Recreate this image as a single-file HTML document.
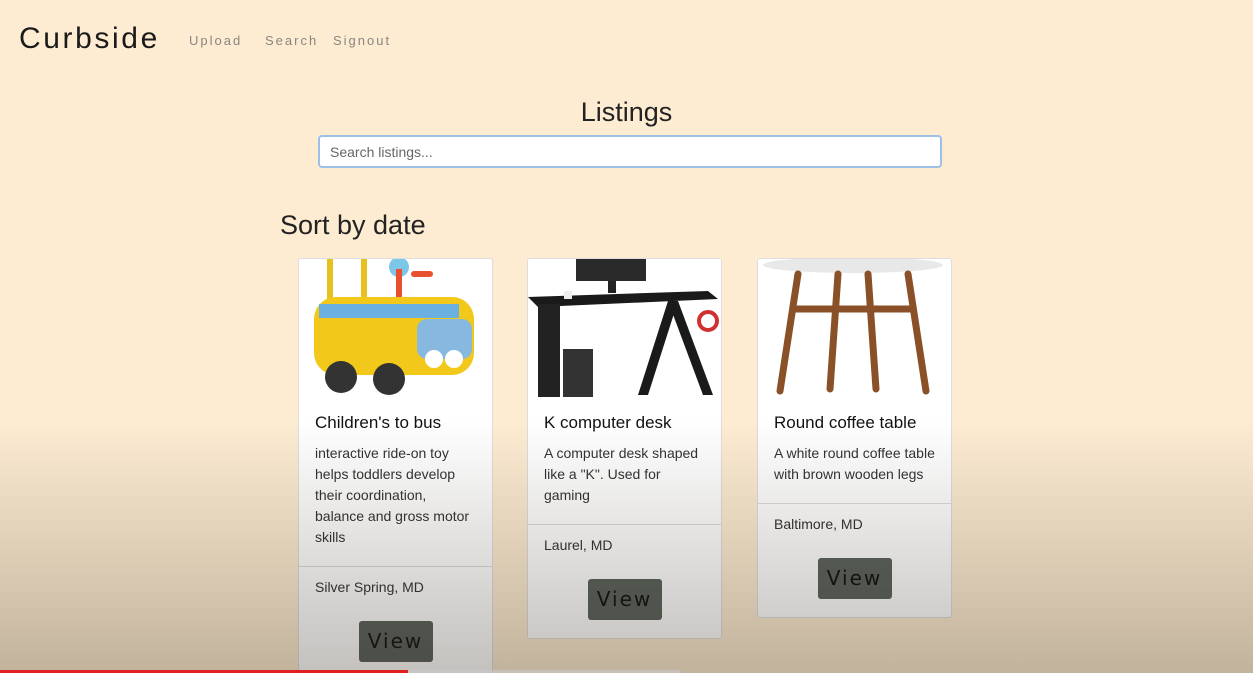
<!DOCTYPE html>
<html style="overflow:hidden"><head><style>
body{margin:0;width:1253px;height:673px;overflow:hidden;background:#fdecd2;font-family:"Liberation Sans",sans-serif;position:relative}
.logo{position:absolute;left:19px;top:22px;font-size:30px;letter-spacing:2.6px;color:#1a1a1a;font-family:"Liberation Sans",sans-serif}
.nav{position:absolute;top:33px;font-size:13px;letter-spacing:2px;color:#8a8580;font-family:"Liberation Sans",sans-serif}
h1{position:absolute;left:0;width:1253px;top:97px;margin:0;text-align:center;font-weight:normal;font-size:27px;color:#222}
.search{position:absolute;left:318px;top:135px;width:624px;height:33px;border:2px solid #9ec0e6;border-radius:4px;background:#fff;box-sizing:border-box;font-size:14px;color:#666;padding:7px 10px}
h2{position:absolute;left:280px;top:210px;margin:0;font-weight:normal;font-size:27px;color:#222}
.card{position:absolute;top:258px;width:193px;background:#fff;border:1px solid #ddd;border-radius:3px}
.img{height:138px;position:relative;overflow:hidden}
.t{font-size:17px;color:#111;margin:16px 16px 0}
.d{font-size:14px;color:#333;line-height:21px;margin:10px 16px 0}
.f{border-top:1px solid #ddd;margin-top:18px;padding:12px 16px 0;font-size:14px;color:#333}
.btn{display:block;margin:26px auto 18px;width:74px;height:41px;background:#5a625c;border-radius:3px;color:#111;font-family:"DejaVu Sans",sans-serif;font-size:20px;letter-spacing:2px;text-align:center;line-height:41px}
.ov{position:absolute;left:0;top:0;width:1253px;height:673px;background:linear-gradient(to bottom,rgba(0,0,0,0) 0,rgba(0,0,0,0) 420px,rgba(40,30,20,.28) 673px);pointer-events:none}
</style></head><body>
<div class="logo">Curbside</div>
<div class="nav" style="left:189px">Upload</div>
<div class="nav" style="left:265px">Search</div>
<div class="nav" style="left:333px">Signout</div>
<h1>Listings</h1>
<div class="search">Search listings...</div>
<h2>Sort by date</h2>

<div class="card" style="left:298px">
<div class="img"><svg width="193" height="138">
<rect x="28" y="0" width="6" height="40" fill="#e8c020"/><rect x="62" y="0" width="6" height="40" fill="#e8c020"/>
<circle cx="100" cy="8" r="10" fill="#7cc7e8"/><rect x="97" y="10" width="6" height="30" fill="#e85030"/><rect x="112" y="12" width="22" height="6" rx="3" fill="#e85030"/>
<rect x="15" y="38" width="160" height="78" rx="22" fill="#f2c81a"/>
<rect x="20" y="45" width="140" height="14" fill="#6ab0e0"/>
<rect x="118" y="60" width="55" height="40" rx="10" fill="#86b8e0"/>
<circle cx="135" cy="100" r="9" fill="#fff"/><circle cx="155" cy="100" r="9" fill="#fff"/>
<circle cx="42" cy="118" r="16" fill="#333"/><circle cx="90" cy="120" r="16" fill="#333"/>
</svg></div>
<div class="t">Children's to bus</div>
<div class="d">interactive ride-on toy helps toddlers develop their coordination, balance and gross motor skills</div>
<div class="f">Silver Spring, MD<span class="btn">View</span></div>
</div>

<div class="card" style="left:527px">
<div class="img"><svg width="193" height="138">
<rect x="48" y="0" width="70" height="22" fill="#2a2a2a"/><rect x="80" y="22" width="8" height="12" fill="#222"/>
<polygon points="0,38 180,32 190,40 10,48" fill="#1a1a1a"/>
<rect x="10" y="45" width="22" height="93" fill="#222"/><rect x="35" y="90" width="30" height="48" fill="#333"/>
<polygon points="140,42 150,42 185,136 175,136" fill="#1a1a1a"/><polygon points="140,42 150,42 120,136 110,136" fill="#1a1a1a"/>
<circle cx="180" cy="62" r="9" fill="none" stroke="#d03030" stroke-width="4"/>
<rect x="36" y="32" width="8" height="8" fill="#eee"/>
</svg></div>
<div class="t">K computer desk</div>
<div class="d">A computer desk shaped like a "K". Used for gaming</div>
<div class="f">Laurel, MD<span class="btn">View</span></div>
</div>

<div class="card" style="left:757px">
<div class="img"><svg width="193" height="138">
<ellipse cx="95" cy="6" rx="90" ry="8" fill="#e8e8e8"/>
<g stroke="#8a5028" stroke-width="7" stroke-linecap="round">
<line x1="40" y1="15" x2="22" y2="132"/><line x1="150" y1="15" x2="168" y2="132"/>
<line x1="80" y1="15" x2="72" y2="130"/><line x1="110" y1="15" x2="118" y2="130"/>
<line x1="35" y1="50" x2="155" y2="50"/><line x1="60" y1="50" x2="130" y2="50"/>
</g></svg></div>
<div class="t">Round coffee table</div>
<div class="d">A white round coffee table with brown wooden legs</div>
<div class="f">Baltimore, MD<span class="btn">View</span></div>
</div>

<div class="ov"></div>
<div style="position:absolute;left:0;top:670px;width:408px;height:3px;background:#e02020"></div>
<div style="position:absolute;left:408px;top:670px;width:272px;height:3px;background:rgba(200,200,200,.6)"></div>
</body></html>
